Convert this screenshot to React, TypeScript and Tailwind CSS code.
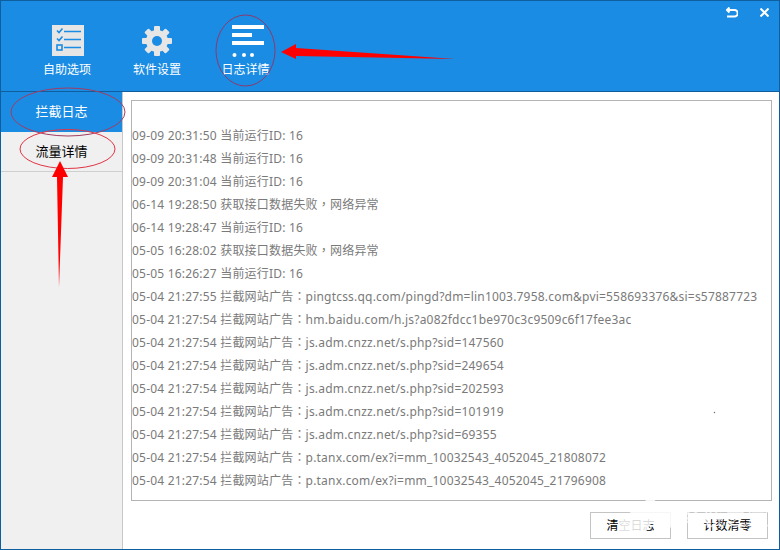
const logLines = [
    '09-09 20:31:50 当前运行ID: 16',
    '09-09 20:31:48 当前运行ID: 16',
    '09-09 20:31:04 当前运行ID: 16',
    '06-14 19:28:50 获取接口数据失败，网络异常',
    '06-14 19:28:47 当前运行ID: 16',
    '05-05 16:28:02 获取接口数据失败，网络异常',
    '05-05 16:26:27 当前运行ID: 16',
    '05-04 21:27:55 拦截网站广告：pingtcss.qq.com/pingd?dm=lin1003.7958.com&pvi=558693376&si=s57887723',
    '05-04 21:27:54 拦截网站广告：hm.baidu.com/h.js?a082fdcc1be970c3c9509c6f17fee3ac',
    '05-04 21:27:54 拦截网站广告：js.adm.cnzz.net/s.php?sid=147560',
    '05-04 21:27:54 拦截网站广告：js.adm.cnzz.net/s.php?sid=249654',
    '05-04 21:27:54 拦截网站广告：js.adm.cnzz.net/s.php?sid=202593',
    '05-04 21:27:54 拦截网站广告：js.adm.cnzz.net/s.php?sid=101919',
    '05-04 21:27:54 拦截网站广告：js.adm.cnzz.net/s.php?sid=69355',
    '05-04 21:27:54 拦截网站广告：p.tanx.com/ex?i=mm_10032543_4052045_21808072',
    '05-04 21:27:54 拦截网站广告：p.tanx.com/ex?i=mm_10032543_4052045_21796908',
];

const ChecklistIcon = () => (
    <svg className="ml-[2px]" width="32" height="32" viewBox="0 0 32 32">
        <rect width="32" height="31" fill="#e6e6e6" />
        <g stroke="#1a8ce4" strokeWidth="1.6" fill="none">
            <path d="M12 6.5h17M12 14.5h17M12 22.5h17" />
            <path d="M5 5.5l2 2 3.5-4M5 13.5l2 2 3.5-4" />
            <rect x="5" y="20" width="5" height="5" />
        </g>
    </svg>
);

const GearIcon = () => (
    <svg width="32" height="32" viewBox="0 0 32 32">
        <g fill="#e6e6e6">
            <circle cx="16" cy="16" r="11" />
            <rect x="13" y="1" width="6" height="30" rx="1" />
            <rect x="13" y="1" width="6" height="30" rx="1" transform="rotate(45 16 16)" />
            <rect x="13" y="1" width="6" height="30" rx="1" transform="rotate(90 16 16)" />
            <rect x="13" y="1" width="6" height="30" rx="1" transform="rotate(135 16 16)" />
        </g>
        <circle cx="16" cy="16" r="5" fill="#1a8ce4" />
    </svg>
);

const LogIcon = () => (
    <svg className="ml-[2px]" width="32" height="32" viewBox="0 0 32 32">
        <g fill="#fff">
            <rect x="0" y="0" width="32" height="4" />
            <rect x="0" y="8" width="20" height="4" />
            <rect x="0" y="16" width="32" height="4" />
            <circle cx="2.5" cy="30" r="2" />
            <circle cx="12" cy="30" r="2" />
            <circle cx="20" cy="30" r="2" />
        </g>
    </svg>
);

const ToolButton = ({ icon, label, labelClass = '' }: { icon: React.ReactNode; label: string; labelClass?: string }) => (
    <div className="flex w-[90px] flex-col items-center pt-6">
        {icon}
        <span className={`mt-[5px] text-xs leading-[16px] text-white ${labelClass}`}>{label}</span>
    </div>
);

// the picture's fullwidth punctuation sits centred in its cell, as in the TC font
const LogLine = ({ line }: { line: string }) => (
    <div className="h-[23px] whitespace-nowrap">
        {line.split(/([：，])/).map((part, i) =>
            part === '：' || part === '，' ? (
                <span key={i} className="font-['Noto_Sans_CJK_TC',sans-serif] leading-none">{part}</span>
            ) : (
                part
            ),
        )}
    </div>
);

const App = () => {
    return (
        <div className="relative flex h-[550px] w-[780px] flex-col overflow-hidden border-x border-b border-[#0f5f9f] bg-white font-['Noto_Sans','Noto_Sans_CJK_SC',sans-serif]">
            <header className="relative flex h-[92px] shrink-0 border-y border-[#0f5f9f] bg-[#1a8ce4] pl-[21px]">
                <ToolButton icon={<ChecklistIcon />} label="自助选项" />
                <ToolButton icon={<GearIcon />} label="软件设置" />
                <ToolButton icon={<LogIcon />} label="日志详情" labelClass="-ml-[3px]" />
                <div className="absolute right-[10px] top-[6px] flex items-center gap-[22px]">
                    <svg width="12" height="11" viewBox="0 0 12 11" fill="none" stroke="#fff" strokeWidth="2">
                        <path d="M1 3h7.5a2.5 2.5 0 0 1 0 6.5H1M3.5 0.5L1 3l2.5 2.5" />
                    </svg>
                    <svg width="9" height="9" viewBox="0 0 9 9" fill="none" stroke="#fff" strokeWidth="2">
                        <path d="M0.5 0.5l8 8M8.5 0.5l-8 8" />
                    </svg>
                </div>
            </header>

            <div className="flex min-h-0 flex-1">
                <aside className="w-[122px] shrink-0 border-r border-[#c8c8c8] bg-[#f0f0f0] text-center text-[13px]">
                    <div className="flex h-10 items-center justify-center bg-[#1a8ce4] text-white">拦截日志</div>
                    <div className="flex h-10 items-center justify-center border-b border-[#cfcfcf] text-black">流量详情</div>
                </aside>

                <main className="flex min-w-0 flex-1 flex-col pl-2 pr-[7px] pt-2">
                    <div className="h-[401px] border border-[#b4b4b4] pr-[13px] pt-[23px]">
                        <div className="overflow-hidden text-xs leading-[23px] tracking-[0.2px] text-[#7a7a7a]">
                            {logLines.map((line) => (
                                <LogLine key={line} line={line} />
                            ))}
                        </div>
                    </div>
                    <div className="mt-[11px] flex justify-end gap-4 pr-1 text-xs text-black">
                        <button type="button" className="h-[27px] w-[81px] border border-[#c4c4c4] bg-white">清空日志</button>
                        <button type="button" className="h-[27px] w-[81px] border border-[#c4c4c4] bg-white">计数清零</button>
                    </div>
                </main>
            </div>

            {/* annotations drawn on top of the screenshot */}
            <svg className="pointer-events-none absolute left-[-1px] top-0" width="780" height="550" viewBox="0 0 780 550" fill="none">
                <ellipse cx="245.5" cy="50.5" rx="29.5" ry="35.5" stroke="#8c3a6c" strokeWidth="1" />
                <ellipse cx="68" cy="112" rx="57" ry="24" stroke="#a23c62" strokeWidth="1" />
                <ellipse cx="67.5" cy="149" rx="47.5" ry="19.5" stroke="#e03444" strokeWidth="1" />
                <polygon points="281,52 296,44 296,48 455,59 296,56 296,59" fill="#ff0000" />
                <polygon points="60,161 68,177 63,177 59,287 57,177 52,177" fill="#ff0000" />
                <circle cx="714.5" cy="412.5" r="0.7" fill="#666" />
                {/* site watermark logo */}
                <polygon points="650,497 680,518 668,530 652,522 642,538 620,538 618,522" fill="#fff" fillOpacity="0.85" />
            </svg>
            <span className="pointer-events-none absolute left-[680px] top-[503px] text-[22px] leading-[26px] text-white/70">系统之家</span>
        </div>
    );
};

export default App;
